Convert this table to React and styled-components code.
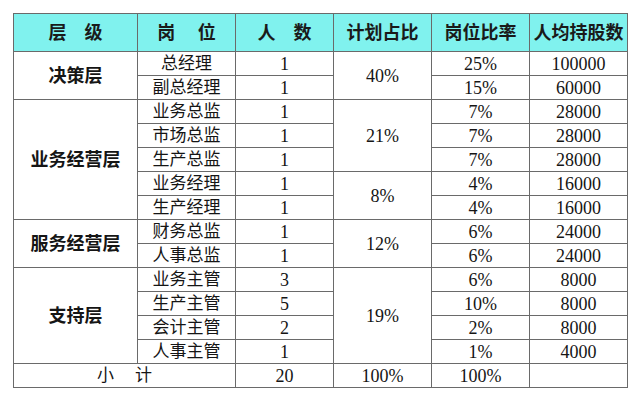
import React from "react";
import styled, { createGlobalStyle } from "styled-components";

const Global = createGlobalStyle`
  html, body { margin: 0; padding: 0; background: #ffffff; }
  body { width: 640px; height: 401px; overflow: hidden; }
`;

const Page = styled.div`
  padding: 13px 0 0 13px;
`;

const Table = styled.table`
  border-collapse: collapse;
  table-layout: fixed;
  width: 615px;
  font-family: "Liberation Serif", "Noto Sans CJK SC", serif;
  color: #151515;
  border: 1px solid #5a5a5a;
`;

const Col = styled.col`
  width: ${(p) => p.$w}px;
`;

const HeadRow = styled.tr`
  height: 38px;
  background: #80f2ee;
`;

const BodyRow = styled.tr`
  height: 24px;
`;

const HeadCell = styled.th`
  border: 1px solid #6a6a6a;
  padding: 0;
  font-size: 18px;
  font-weight: 700;
  text-align: center;
  vertical-align: middle;
  white-space: pre;
  line-height: 1;
  color: #1a1a1a;
`;

const Cell = styled.td`
  border: 1px solid #6a6a6a;
  padding: 0;
  font-size: ${(p) => (p.$num || p.$bold ? 18 : 17)}px;
  font-weight: ${(p) => (p.$bold ? 700 : 400)};
  text-align: center;
  vertical-align: middle;
  white-space: pre;
  line-height: 1;
`;

const groups = [
  {
    level: "决策层",
    rows: [
      ["总经理", "1", "25%", "100000"],
      ["副总经理", "1", "15%", "60000"],
    ],
    plans: [["40%", 2]],
  },
  {
    level: "业务经营层",
    rows: [
      ["业务总监", "1", "7%", "28000"],
      ["市场总监", "1", "7%", "28000"],
      ["生产总监", "1", "7%", "28000"],
      ["业务经理", "1", "4%", "16000"],
      ["生产经理", "1", "4%", "16000"],
    ],
    plans: [["21%", 3], ["8%", 2]],
  },
  {
    level: "服务经营层",
    rows: [
      ["财务总监", "1", "6%", "24000"],
      ["人事总监", "1", "6%", "24000"],
    ],
    plans: [["12%", 2]],
  },
  {
    level: "支持层",
    rows: [
      ["业务主管", "3", "6%", "8000"],
      ["生产主管", "5", "10%", "8000"],
      ["会计主管", "2", "2%", "8000"],
      ["人事主管", "1", "1%", "4000"],
    ],
    plans: [["19%", 4]],
  },
];

function planAt(plans, i) {
  let idx = 0;
  for (const [val, span] of plans) {
    if (i === idx) return [val, span];
    idx += span;
  }
  return null;
}

export default function App() {
  return (
    <>
      <Global />
      <Page>
        <Table>
          <colgroup>
            <Col $w={124} />
            <Col $w={98} />
            <Col $w={98} />
            <Col $w={98} />
            <Col $w={98} />
            <Col $w={98} />
          </colgroup>
          <thead>
            <HeadRow>
              <HeadCell>{"层　级"}</HeadCell>
              <HeadCell>{"岗　 位"}</HeadCell>
              <HeadCell>{"人　数"}</HeadCell>
              <HeadCell>计划占比</HeadCell>
              <HeadCell>岗位比率</HeadCell>
              <HeadCell>人均持股数</HeadCell>
            </HeadRow>
          </thead>
          <tbody>
            {groups.map((g) =>
              g.rows.map((r, i) => {
                const plan = planAt(g.plans, i);
                return (
                  <BodyRow key={g.level + i}>
                    {i === 0 && (
                      <Cell $bold rowSpan={g.rows.length}>
                        {g.level}
                      </Cell>
                    )}
                    <Cell>{r[0]}</Cell>
                    <Cell $num>{r[1]}</Cell>
                    {plan && (
                      <Cell $num rowSpan={plan[1]}>
                        {plan[0]}
                      </Cell>
                    )}
                    <Cell $num>{r[2]}</Cell>
                    <Cell $num>{r[3]}</Cell>
                  </BodyRow>
                );
              })
            )}
            <BodyRow>
              <Cell colSpan={2}>{"小　 计"}</Cell>
              <Cell $num>20</Cell>
              <Cell $num>100%</Cell>
              <Cell $num>100%</Cell>
              <Cell />
            </BodyRow>
          </tbody>
        </Table>
      </Page>
    </>
  );
}
